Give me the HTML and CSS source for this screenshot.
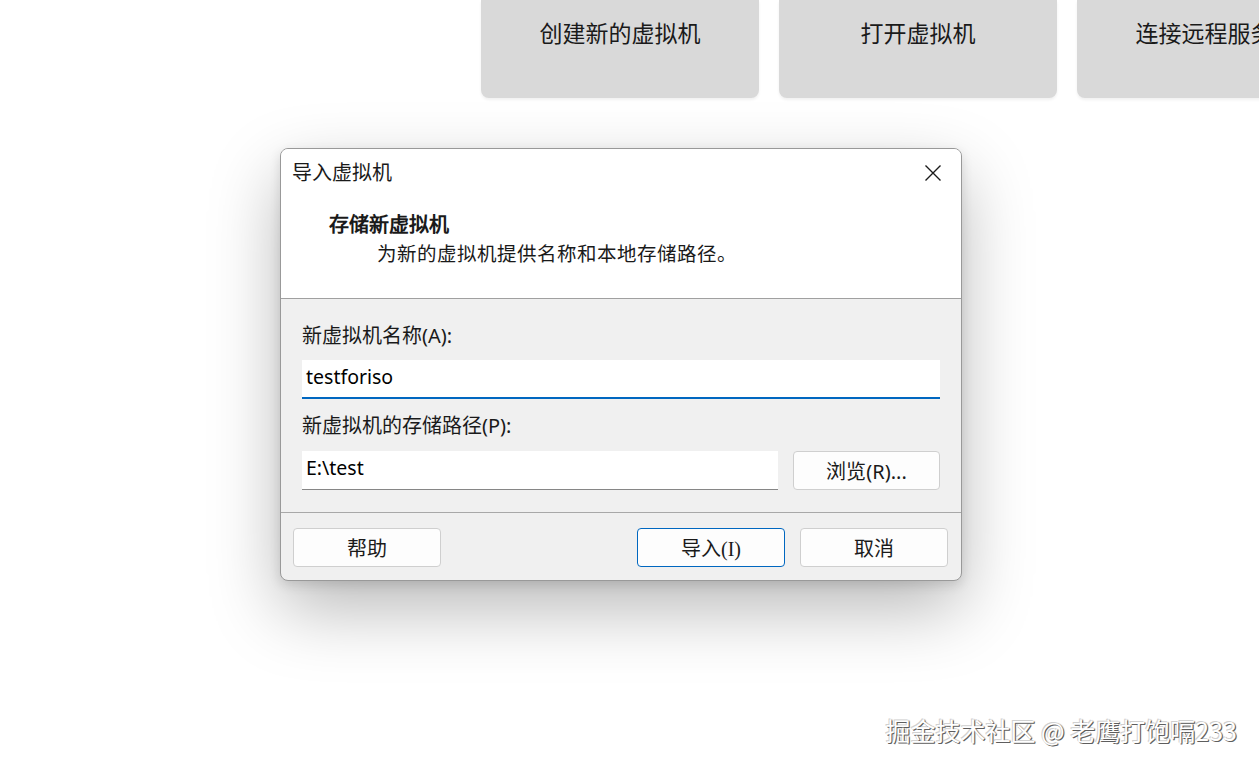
FILE: index.html
```html
<!DOCTYPE html>
<html lang="zh-CN">
<head>
    <meta charset="UTF-8">
    <meta name="viewport" content="width=device-width, initial-scale=1.0">
    <title>导入虚拟机</title>
    <link rel="stylesheet" href="styles.css">
</head>
<body>
    <div class="cards">
        <div class="card">创建新的虚拟机</div>
        <div class="card">打开虚拟机</div>
        <div class="card">连接远程服务器</div>
    </div>

    <div class="dialog">
        <div class="dialog-head">
            <div class="title-row">
                <span class="title">导入虚拟机</span>
                <svg class="close" width="18" height="18" viewBox="0 0 18 18">
                    <path d="M1.5 1.5 L16.5 16.5 M16.5 1.5 L1.5 16.5" stroke="#1b1b1b" stroke-width="1.4" fill="none"/>
                </svg>
            </div>
            <div class="step">存储新虚拟机</div>
            <div class="step-desc">为新的虚拟机提供名称和本地存储路径。</div>
        </div>

        <div class="dialog-body">
            <div class="label">新虚拟机名称<span class="latin">(A):</span></div>
            <div class="field active">testforiso</div>
            <div class="label second">新虚拟机的存储路径<span class="latin">(P):</span></div>
            <div class="path-row">
                <div class="field path">E:\test</div>
                <button class="btn browse">浏览<span class="latin">(R)...</span></button>
            </div>
        </div>

        <div class="dialog-foot">
            <button class="btn">帮助</button>
            <div class="spacer"></div>
            <button class="btn primary">导入(I)</button>
            <button class="btn">取消</button>
        </div>
    </div>

    <div class="watermark">掘金技术社区 @ 老鹰打饱嗝233</div>
</body>
</html>
```

FILE: styles.css
```css
html, body {
    margin: 0;
    height: 100%;
}
body {
    background: #ffffff;
    overflow: hidden;
    position: relative;
    font-family: "Noto Sans", "Noto Sans CJK SC", sans-serif;
    color: #1a1a1a;
}
.cards {
    display: flex;
    gap: 20px;
    padding-left: 481px;
}
.card {
    flex: 0 0 278px;
    height: 98px;
    box-sizing: border-box;
    padding-top: 17px;
    background: #d9d9d9;
    border-radius: 0 0 8px 8px;
    box-shadow: 0 2px 3px rgba(0, 0, 0, 0.06);
    text-align: center;
    font-family: "Noto Sans CJK SC", sans-serif;
    font-size: 23px;
    line-height: 30px;
    white-space: nowrap;
    overflow: hidden;
}
.dialog {
    margin: 50px 0 0 280px;
    width: 682px;
    box-sizing: border-box;
    border: 1px solid #999999;
    border-radius: 8px;
    overflow: hidden;
    background: #f0f0f0;
    box-shadow: 0 28px 70px rgba(0, 0, 0, 0.28), 0 4px 12px rgba(0, 0, 0, 0.12);
}
.dialog-head {
    background: #ffffff;
    border-bottom: 1px solid #a0a0a0;
    padding: 11px 0 31px 0;
}
.title-row {
    display: flex;
    align-items: center;
    justify-content: space-between;
    height: 24px;
    padding: 0 19px 0 11px;
}
.title {
    font-family: "Noto Sans CJK SC", sans-serif;
    font-size: 20px;
    line-height: 24px;
}
.close {
    margin-top: 1px;
}
.step {
    margin: 29px 0 0 48px;
    font-family: "Liberation Serif", serif;
    font-weight: bold;
    font-size: 20px;
    line-height: 24px;
}
.step-desc {
    margin: 6px 0 0 96px;
    font-family: "Liberation Serif", serif;
    font-size: 19.5px;
    line-height: 24px;
}
.dialog-body {
    padding: 25px 21px 22px 21px;
    border-bottom: 1px solid #a8a8a8;
}
.label {
    font-family: "Liberation Serif", serif;
    font-size: 20px;
    line-height: 24px;
}
.label.second {
    margin-top: 15px;
}
.latin {
    font-family: "Noto Sans", sans-serif;
}
.field {
    margin-top: 12px;
    height: 39px;
    box-sizing: border-box;
    background: #ffffff;
    border-bottom: 1px solid #868686;
    padding: 3px 0 0 4px;
    font-size: 19.5px;
    line-height: 28px;
    color: #000;
}
.field.active {
    border-bottom: 2px solid #0067c0;
}
.path-row {
    display: flex;
    gap: 15px;
    margin-top: 13px;
}
.path-row .field {
    margin-top: 0;
    flex: 0 0 476px;
}
.btn {
    width: 148px;
    height: 39px;
    box-sizing: border-box;
    background: #fdfdfd;
    border: 1px solid #cfcfcf;
    border-radius: 4px;
    font-family: "Liberation Serif", serif;
    font-size: 20px;
    color: #1a1a1a;
    padding: 0;
}
.btn.browse {
    width: 147px;
}
.btn.primary {
    border-color: #0067c0;
}
.dialog-foot {
    display: flex;
    gap: 15px;
    padding: 15px 13px 13px 12px;
}
.spacer {
    flex: 1;
}
.watermark {
    position: absolute;
    right: 22px;
    top: 714px;
    font-family: "Noto Sans CJK SC", sans-serif;
    font-size: 25px;
    line-height: 32px;
    color: #ffffff;
    text-shadow: 1px 1px 0 #5e5e5e, -1px -1px 0 #d0d0d0, 1px 0 1px #8a8a8a;
}
```
